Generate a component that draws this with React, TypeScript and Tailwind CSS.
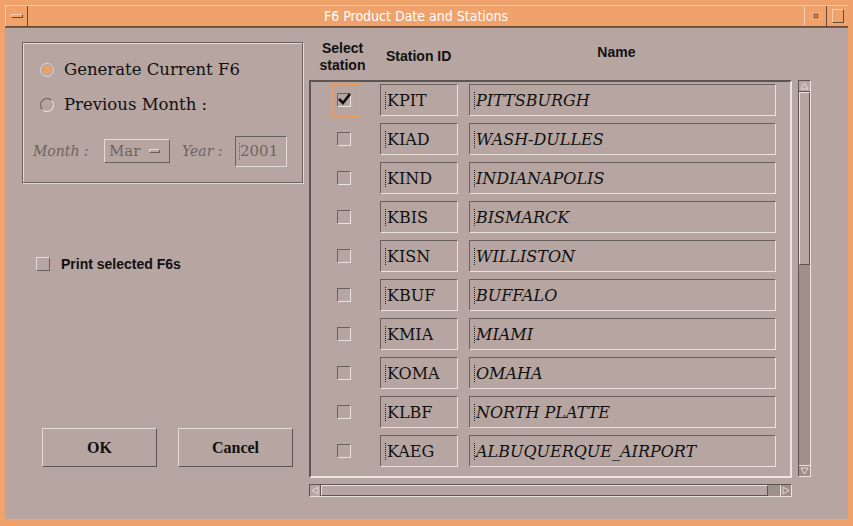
import React from 'react';

const stations = [
  { id: 'KPIT', name: 'PITTSBURGH', checked: true },
  { id: 'KIAD', name: 'WASH-DULLES' },
  { id: 'KIND', name: 'INDIANAPOLIS' },
  { id: 'KBIS', name: 'BISMARCK' },
  { id: 'KISN', name: 'WILLISTON' },
  { id: 'KBUF', name: 'BUFFALO' },
  { id: 'KMIA', name: 'MIAMI' },
  { id: 'KOMA', name: 'OMAHA' },
  { id: 'KLBF', name: 'NORTH PLATTE' },
  { id: 'KAEG', name: 'ALBUQUERQUE_AIRPORT' },
];

function Cursor() {
  return <span className="inline-block w-[1px] h-[17px] mr-[1px] border-l border-dotted border-[#202020]" />;
}

function Field({ children, className }: { children: React.ReactNode; className: string }) {
  return (
    <div
      className={
        'h-[32px] flex items-center pl-[4px] pt-[1px] border-t border-l border-[#6a605c] border-b border-r border-b-[#ece2de] border-r-[#ece2de] ' +
        className
      }
    >
      <Cursor />
      {children}
    </div>
  );
}

function StationRow({ id, name, checked }: { id: string; name: string; checked?: boolean }) {
  return (
    <div className="flex items-center h-[32px] mb-[7px]">
      <div
        className={
          'ml-[21px] w-[28px] h-[33px] flex items-center pl-[4px] border ' +
          (checked ? 'border-[#ec9a5e]' : 'border-transparent')
        }
      >
        <div className="w-[14px] h-[14px] border-t border-l border-[#6a605c] border-b border-r border-b-[#ece2de] border-r-[#ece2de] relative">
          {checked && (
            <svg className="absolute left-[-1px] top-[-3px]" width="16" height="16" viewBox="0 0 16 16">
              <path d="M2 8 L6 12 L13 3" fill="none" stroke="#101010" strokeWidth="2.6" />
            </svg>
          )}
        </div>
      </div>
      <Field className="ml-[20px] w-[78px] text-[16px] text-[#111] font-['DejaVu_Serif',serif]">{id}</Field>
      <Field className="ml-[11px] w-[307px] text-[16px] italic text-[#111] font-['DejaVu_Serif',serif]">{name}</Field>
    </div>
  );
}

export default function App() {
  return (
    <div className="w-[853px] h-[526px] bg-[#efa26c] pt-[5px] pb-[7px] px-[5px] flex flex-col font-['Liberation_Serif',serif]">
      {/* Title bar */}
      <div className="h-[22px] flex border-t border-l border-[#f8c8a0] border-b border-b-[#6a4a30] shrink-0">
        <div className="w-[22px] flex items-center justify-center border-r border-[#6a4a30]">
          <div className="w-[12px] h-[4px] border border-[#6a4a30] border-t-[#fbd0b0] border-l-[#fbd0b0]" />
        </div>
        <div className="flex-1 flex items-center justify-center text-white text-[14px] font-['DejaVu_Sans_Condensed','Liberation_Sans',sans-serif]">
          F6 Product Date and Stations
        </div>
        <div className="w-[22px] flex items-center justify-center border-l border-[#fbd0b0]">
          <div className="w-[4px] h-[4px] border border-[#6a4a30]" />
        </div>
        <div className="w-[22px] flex items-center justify-center border-l border-[#6a4a30]">
          <div className="w-[12px] h-[14px] border border-[#6a4a30] border-t-[#fbd0b0] border-l-[#fbd0b0]" />
        </div>
      </div>

      {/* Content */}
      <div className="flex-1 flex bg-[#b6a5a0] border-t border-[#6a605c]">
        {/* Left panel */}
        <div className="w-[304px] flex flex-col">
          <div className="ml-[17px] mt-[14px] w-[281px] h-[141px] border border-[#6a605c] shadow-[inset_1px_1px_0_#e4dad6,1px_1px_0_#e4dad6] flex flex-col font-['DejaVu_Serif',serif]">
            <div className="flex items-center mt-[17px] ml-[17px] h-[20px]">
              <div className="w-[14px] h-[14px] rounded-full border border-[#e0d4d0] flex items-center justify-center">
                <div className="w-[8px] h-[8px] rounded-full bg-[#f0a060]" />
              </div>
              <span className="ml-[10px] text-[16.5px] text-[#111] leading-none">Generate Current F6</span>
            </div>
            <div className="flex items-center mt-[15px] ml-[17px] h-[20px]">
              <div className="w-[14px] h-[14px] rounded-full border border-[#6a605c] border-b-[#ece2de] border-r-[#ece2de]" />
              <span className="ml-[10px] text-[16.5px] text-[#111] leading-none">Previous Month :</span>
            </div>
            <div className="flex items-center mt-[21px] ml-[10px] h-[30px]">
              <span className="text-[14px] italic text-[#6e6462] w-[71px]">Month :</span>
              <div className="w-[66px] h-[24px] flex items-center justify-between pl-[4px] pr-[9px] border border-[#6a605c] border-t-[#e4dad6] border-l-[#e4dad6]">
                <span className="text-[15px] text-[#6e6462]">Mar</span>
                <div className="w-[11px] h-[4px] border border-[#6a605c] border-t-[#e4dad6] border-l-[#e4dad6]" />
              </div>
              <span className="ml-[12px] text-[14px] italic text-[#6e6462] w-[53px]">Year :</span>
              <div className="w-[52px] h-[31px] flex items-center pl-[3px] border border-[#6a605c] border-b-[#e4dad6] border-r-[#e4dad6]">
                <span className="inline-block w-[1px] h-[17px] border-l border-dotted border-[#6e6462]" />
                <span className="text-[15px] text-[#6e6462]">2001</span>
              </div>
            </div>
          </div>

          <div className="flex items-center ml-[31px] mt-[74px] h-[14px]">
            <div className="w-[14px] h-[14px] border border-[#e4dad6] border-b-[#6a605c] border-r-[#6a605c]" />
            <span className="ml-[11px] text-[14px] font-bold text-[#111] font-['Liberation_Sans',sans-serif]">
              Print selected F6s
            </span>
          </div>

          <div className="flex ml-[37px] mt-[157px] gap-[21px]">
            <button className="w-[115px] h-[39px] border border-[#e4dad6] border-b-[#5c5450] border-r-[#5c5450] text-[16px] font-bold text-[#111]">
              OK
            </button>
            <button className="w-[115px] h-[39px] border border-[#e4dad6] border-b-[#5c5450] border-r-[#5c5450] text-[16px] font-bold text-[#111]">
              Cancel
            </button>
          </div>
        </div>

        {/* Right panel */}
        <div className="flex flex-col">
          <div className="h-[52px] flex font-['Liberation_Sans',sans-serif] font-bold text-[14px] text-[#111]">
            <div className="w-[67px] flex flex-col items-center pt-[12px] leading-[17px]">
              <span>Select</span>
              <span>station</span>
            </div>
            <div className="ml-[10px] pt-[18px]">Station ID</div>
            <div className="ml-[146px] pt-[14px]">Name</div>
          </div>

          <div className="flex">
            <div className="w-[483px] h-[398px] border-2 border-[#5c5450] border-b-[#ece2de] border-r-[#ece2de] pt-[2px]">
              {stations.map((s) => (
                <StationRow key={s.id} id={s.id} name={s.name} checked={s.checked} />
              ))}
            </div>
            {/* Vertical scrollbar */}
            <div className="ml-[6px] w-[13px] h-[397px] flex flex-col border border-[#5c5450] border-r-[#ece2de] border-b-[#ece2de] bg-[#9e8f89]">
              <div className="h-[11px] flex items-center justify-center bg-[#b6a5a0] border-b border-[#5c5450]">
                <svg width="9" height="8" viewBox="0 0 9 8">
                  <path d="M4.5 1 L8 7 L1 7 Z" fill="none" stroke="#e4dad6" strokeWidth="1" />
                </svg>
              </div>
              <div className="h-[173px] bg-[#b6a5a0] border-t border-l border-[#ece2de] border-b border-r border-b-[#5c5450] border-r-[#5c5450]" />
              <div className="flex-1" />
              <div className="h-[11px] flex items-center justify-center border-t border-[#ece2de]">
                <svg width="9" height="8" viewBox="0 0 9 8">
                  <path d="M1 1 L8 1 L4.5 7 Z" fill="none" stroke="#e4dad6" strokeWidth="1" />
                </svg>
              </div>
            </div>
          </div>

          {/* Horizontal scrollbar */}
          <div className="mt-[6px] w-[483px] h-[13px] flex border border-[#5c5450] border-r-[#ece2de] border-b-[#ece2de] bg-[#9e8f89]">
            <div className="w-[11px] flex items-center justify-center bg-[#b6a5a0] border-r border-[#5c5450]">
              <svg width="8" height="9" viewBox="0 0 8 9">
                <path d="M1 4.5 L7 1 L7 8 Z" fill="none" stroke="#e4dad6" strokeWidth="1" />
              </svg>
            </div>
            <div className="w-[447px] bg-[#b6a5a0] border-t border-l border-[#ece2de] border-b border-r border-b-[#5c5450] border-r-[#5c5450]" />
            <div className="flex-1" />
            <div className="w-[11px] flex items-center justify-center border-l border-[#ece2de]">
              <svg width="8" height="9" viewBox="0 0 8 9">
                <path d="M1 1 L7 4.5 L1 8 Z" fill="none" stroke="#e4dad6" strokeWidth="1" />
              </svg>
            </div>
          </div>
        </div>
      </div>
    </div>
  );
}
